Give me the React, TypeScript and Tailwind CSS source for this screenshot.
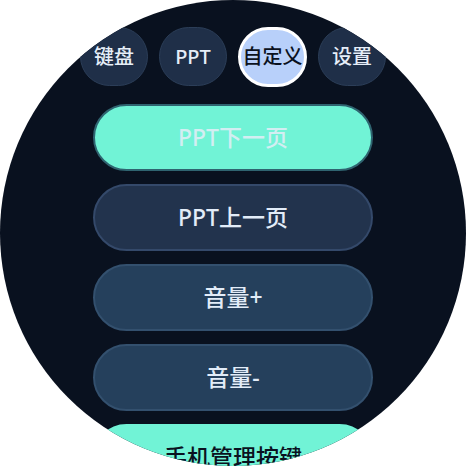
const tabs = [
  { label: '键盘', active: false },
  { label: 'PPT', active: false },
  { label: '自定义', active: true },
  { label: '设置', active: false },
];

const actions = [
  { label: 'PPT下一页', tone: 'teal' },
  { label: 'PPT上一页', tone: 'slate' },
  { label: '音量+', tone: 'blue' },
  { label: '音量-', tone: 'blue' },
  { label: '手机管理按键', tone: 'solid' },
];

const toneClass: Record<string, string> = {
  teal: 'bg-[#71f3d6] border-[#2f6470] text-[#d3eef2]',
  slate: 'bg-[#22334d] border-[#34496a] text-[#e2ecf8]',
  blue: 'bg-[#25405c] border-[#33506e] text-[#e2ecf8]',
  solid: 'bg-[#71f3d6] border-[#71f3d6] text-[#0a1120]',
};

export default function App() {
  return (
    <div className="h-[466px] w-[466px] bg-white">
      <div
        className="flex h-[466px] w-[466px] flex-col items-center overflow-hidden rounded-full bg-[#09111f] pt-[27px]"
        style={{ fontFamily: '"Noto Sans", "Noto Sans CJK SC", sans-serif' }}
      >
        <div className="flex gap-[11px]">
          {tabs.map((t) => (
            <div
              key={t.label}
              className={
                t.active
                  ? 'flex h-[60px] w-[69px] items-center justify-center rounded-full border-[3px] border-white bg-[#b8d0fa] text-[20px] font-medium text-[#0a1120]'
                  : 'flex h-[59px] w-[68px] items-center justify-center rounded-full border border-[#2c3e58] bg-[#1f2f48] text-[20px] font-medium text-[#e6eef8]'
              }
            >
              {t.label}
            </div>
          ))}
        </div>
        <div className="mt-[17px] flex flex-col gap-[13px]">
          {actions.map((a) => (
            <button
              key={a.label}
              type="button"
              className={`flex h-[67px] w-[280px] shrink-0 items-center justify-center rounded-[34px] border-2 text-[23px] font-medium ${toneClass[a.tone]}`}
            >
              {a.label}
            </button>
          ))}
        </div>
      </div>
    </div>
  );
}
